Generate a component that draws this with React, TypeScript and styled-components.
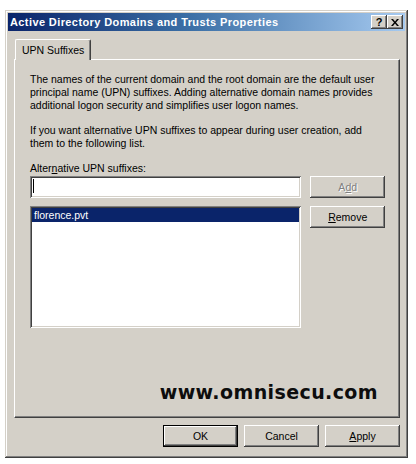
import React from "react";
import styled, { createGlobalStyle } from "styled-components";

const Global = createGlobalStyle`
  html, body { margin: 0; padding: 0; background: #ffffff; }
  body { font-family: "Liberation Sans", Arial, sans-serif; font-size: 10.5px; color: #000; }
`;

const Page = styled.div`
  width: 416px;
  height: 464px;
  padding: 10px 0 0 5px;
  box-sizing: border-box;
`;

const Win = styled.div`
  width: 403px;
  height: 448px;
  box-sizing: border-box;
  background: #d4d0c8;
  padding: 3px;
  display: flex;
  flex-direction: column;
  box-shadow: inset -1px -1px #404040, inset 1px 1px #d4d0c8, inset -2px -2px #808080, inset 2px 2px #ffffff;
`;

const TitleBar = styled.div`
  height: 18px;
  display: flex;
  align-items: center;
  padding: 0 2px 0 2px;
  background: linear-gradient(to right, #0a246a 0%, #3a6ea5 45%, #a6caf0 100%);
  color: #fff;
  font-weight: bold;
  font-size: 11px;
  letter-spacing: 0.4px;
`;

const Title = styled.div`
  flex: 1;
  white-space: nowrap;
`;

const CapBtn = styled.div`
  width: 16px;
  height: 14px;
  box-sizing: border-box;
  background: #d4d0c8;
  display: flex;
  align-items: center;
  justify-content: center;
  box-shadow: inset -1px -1px #404040, inset 1px 1px #ffffff, inset -2px -2px #808080;
  color: #000;
  font-weight: bold;
  font-size: 11px;
  letter-spacing: 0;
`;

const Body = styled.div`
  flex: 1;
  display: flex;
  flex-direction: column;
  padding: 9px 5px 7px 6px;
`;

const TabStrip = styled.div`
  display: flex;
  height: 19px;
  align-items: flex-end;
`;

const Tab = styled.div`
  height: 20px;
  padding: 0 6px 0 6px;
  margin-bottom: -1px;
  position: relative;
  z-index: 1;
  display: flex;
  align-items: center;
  background: #d4d0c8;
  border-top: 1px solid #fff;
  border-left: 1px solid #fff;
  border-right: 1px solid #404040;
  box-shadow: inset -1px 0 #808080;
  border-radius: 2px 2px 0 0;
  margin-left: 1px;
`;

const Panel = styled.div`
  height: 359px;
  box-sizing: border-box;
  display: flex;
  flex-direction: column;
  padding: 13px 14px 0 15px;
  border-top: 1px solid #fff;
  border-left: 1px solid #fff;
  border-right: 1px solid #404040;
  border-bottom: 1px solid #404040;
  box-shadow: inset -1px -1px #808080;
`;

const Para = styled.p`
  margin: 0 0 12px 0;
  width: 352px;
  line-height: 13px;
`;

const Label = styled.div`
  line-height: 13px;
  margin-bottom: 1px;
`;

const Row = styled.div`
  display: flex;
  gap: 9px;
  align-items: flex-start;
`;

const Sunken = styled.div<{ $h: number }>`
  width: 273px;
  height: ${(p) => p.$h}px;
  box-sizing: border-box;
  background: #fff;
  padding: 2px;
  box-shadow: inset 1px 1px #808080, inset -1px -1px #ffffff, inset 2px 2px #404040, inset -2px -2px #d4d0c8;
`;

const Caret = styled.div`
  width: 1px;
  height: 14px;
  background: #000;
  margin: 1px 0 0 1px;
`;

const ListItem = styled.div`
  height: 14px;
  line-height: 14px;
  background: #0a246a;
  color: #fff;
  padding-left: 2px;
`;

const Btn = styled.div<{ $default?: boolean; $disabled?: boolean }>`
  width: 75px;
  height: 22px;
  box-sizing: border-box;
  display: flex;
  align-items: center;
  justify-content: center;
  background: #d4d0c8;
  color: ${(p) => (p.$disabled ? "#808080" : "#000")};
  text-shadow: ${(p) => (p.$disabled ? "1px 1px #ffffff" : "none")};
  box-shadow: ${(p) =>
    p.$default
      ? "inset 0 0 0 1px #000, inset -2px -2px #404040, inset 2px 2px #ffffff, inset -3px -3px #808080"
      : "inset -1px -1px #404040, inset 1px 1px #ffffff, inset -2px -2px #808080"};
`;

const U = styled.span`
  text-decoration: underline;
`;

const ListRow = styled(Row)`
  margin-top: 8px;
`;

const Watermark = styled.div`
  margin-top: auto;
  margin-bottom: 14px;
  align-self: flex-end;
  margin-right: 7px;
  font-family: "DejaVu Sans", Verdana, sans-serif;
  font-weight: 900;
  font-size: 19px;
  letter-spacing: 0.4px;
  color: #0d0d0d;
`;

const Footer = styled.div`
  display: flex;
  justify-content: flex-end;
  gap: 6px;
  margin-top: 7px;
`;

export default function App() {
  return (
    <>
      <Global />
      <Page>
        <Win>
          <TitleBar>
            <Title>Active Directory Domains and Trusts Properties</Title>
            <CapBtn>?</CapBtn>
            <CapBtn>
              <svg width="8" height="7" viewBox="0 0 8 7">
                <path d="M0 0h2l2 2.5L6 0h2L5 3.5 8 7H6L4 4.5 2 7H0l3-3.5z" fill="#000" />
              </svg>
            </CapBtn>
          </TitleBar>
          <Body>
            <TabStrip>
              <Tab>UPN Suffixes</Tab>
            </TabStrip>
            <Panel>
              <Para>
                The names of the current domain and the root domain are the default user principal name (UPN)
                suffixes. Adding alternative domain names provides additional logon security and simplifies user
                logon names.
              </Para>
              <Para>
                If you want alternative UPN suffixes to appear during user creation, add them to the following list.
              </Para>
              <Label>
                Alter<U>n</U>ative UPN suffixes:
              </Label>
              <Row>
                <Sunken $h={22}>
                  <Caret />
                </Sunken>
                <Btn $disabled>
                  A<U>d</U>d
                </Btn>
              </Row>
              <ListRow>
                <Sunken $h={122}>
                  <ListItem>florence.pvt</ListItem>
                </Sunken>
                <Btn>
                  <U>R</U>emove
                </Btn>
              </ListRow>
              <Watermark>www.omnisecu.com</Watermark>
            </Panel>
            <Footer>
              <Btn $default>OK</Btn>
              <Btn>Cancel</Btn>
              <Btn>
                <U>A</U>pply
              </Btn>
            </Footer>
          </Body>
        </Win>
      </Page>
    </>
  );
}
